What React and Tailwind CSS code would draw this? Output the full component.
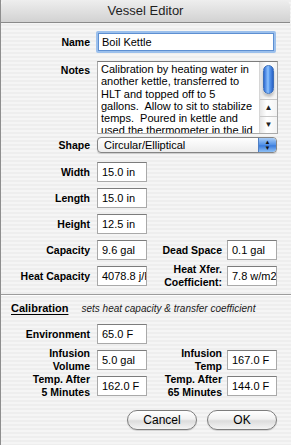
import React from "react";

const NOTES = [
  "Calibration by heating water in",
  "another kettle, transferred to",
  "HLT and topped off to 5",
  "gallons.  Allow to sit to stabilize",
  "temps.  Poured in kettle and",
  "used the thermometer in the lid",
];

function Field({ value }) {
  return (
    <div className="h-[20px] w-[50px] overflow-hidden whitespace-nowrap border border-[#a9a9a9] border-t-[#7c7c7c] bg-white pl-[4px] text-[11px] leading-[18px] text-black">
      {value}
    </div>
  );
}

function Label({ children, w = "w-[89px]" }) {
  return (
    <div className={`${w} shrink-0 text-right text-[10.5px] font-bold leading-[13px] text-black`}>
      {children}
    </div>
  );
}

function Row({ label, value, label2, value2 }) {
  return (
    <div className="flex h-[20px] items-center">
      <Label>{label}</Label>
      <div className="ml-[7px]">
        <Field value={value} />
      </div>
      {label2 && (
        <>
          <Label w="w-[75px]">{label2}</Label>
          <div className="ml-[5px]">
            <Field value={value2} />
          </div>
        </>
      )}
    </div>
  );
}

function AquaButton({ children }) {
  return (
    <div className="flex h-[20px] w-[70px] items-center justify-center rounded-full border border-[#7d7d7d] bg-[linear-gradient(to_bottom,#ffffff_0%,#f1f1f1_45%,#dcdcdc_55%,#f4f4f4_100%)] text-[12px] leading-none text-black shadow-[0_1px_1px_rgba(0,0,0,0.15)]">
      {children}
    </div>
  );
}

export default function App() {
  return (
    <div className="h-[445px] w-[291px] overflow-hidden bg-white font-['Liberation_Sans',Arial,sans-serif]">
      <div className="flex h-full w-[291px] flex-col border-l border-[#8e8e8e] bg-[repeating-linear-gradient(to_bottom,#eeeeee_0px,#eeeeee_2px,#f5f5f5_2px,#f5f5f5_4px)]">
        {/* title bar */}
        <div className="mr-[1px] flex h-[23px] shrink-0 items-center justify-center rounded-t-[6px] border-b border-[#8a8a8a] bg-[linear-gradient(to_bottom,#eeeeee,#d2d2d2)] text-[13px] text-[#1e1e1e]">
          Vessel Editor
        </div>

        {/* name */}
        <div className="mt-[8px] flex h-[22px] items-center">
          <Label>Name</Label>
          <div className="ml-[6px] rounded-[2px] border-2 border-[#9cc0ec]">
            <div className="flex h-[18px] w-[176px] items-center border border-[#5d8fd2] bg-white pl-[3px] text-[11px] text-black">
              Boil Kettle
            </div>
          </div>
        </div>

        {/* notes */}
        <div className="mt-[8px] flex items-start">
          <div className="pt-[3px]">
            <Label>Notes</Label>
          </div>
          <div className="ml-[7px] flex h-[73px] w-[181px] border border-[#a9a9a9] border-t-[#7c7c7c] bg-white">
            <div className="flex-1 overflow-hidden pl-[3px] pt-[1px] text-[11px] leading-[12.25px] text-black">
              {NOTES.map((l) => (
                <div key={l} className="whitespace-pre">
                  {l}
                </div>
              ))}
            </div>
            {/* scrollbar */}
            <div className="flex w-[18px] flex-col border-l border-[#d6d6d6] bg-[linear-gradient(to_right,#e6e6e6,#ffffff_40%,#f3f3f3)]">
              <div className="flex h-[38px] justify-center pt-[3px]">
                <div className="h-[29px] w-[11px] rounded-full border border-[#3d6fb8] bg-[linear-gradient(to_right,#2f6cd4,#8fc3ff_45%,#5b9cf0_60%,#2b62c6)] shadow-[0_3px_3px_rgba(0,0,0,0.25)]" />
              </div>
              <div className="flex-1" />
              <div className="flex h-[17px] items-center justify-center border-t border-[#c8c8c8] text-[8px] text-[#222]">
                ▲
              </div>
              <div className="flex h-[17px] items-center justify-center border-t border-[#c8c8c8] text-[8px] text-[#222]">
                ▼
              </div>
            </div>
          </div>
        </div>

        {/* shape */}
        <div className="mt-[3px] flex h-[16px] items-center">
          <Label>Shape</Label>
          <div className="ml-[7px] flex h-[16px] w-[180px] overflow-hidden rounded-[4px] border border-[#858585] bg-[linear-gradient(to_bottom,#ffffff,#ececec)] shadow-[0_1px_1px_rgba(0,0,0,0.15)]">
            <div className="flex-1 pl-[6px] text-[11px] leading-[14px] text-black">
              Circular/Elliptical
            </div>
            <div className="flex w-[18px] flex-col items-center justify-center rounded-r-[3px] border-l border-[#4f7fc4] bg-[linear-gradient(to_bottom,#a9cdf7,#4f8fe6_50%,#3a7bdc_55%,#8ec0f5)] text-[6px] leading-[6px] text-[#111]">
              <span>▲</span>
              <span>▼</span>
            </div>
          </div>
        </div>

        {/* dimensions */}
        <div className="mt-[9px] flex flex-col gap-[6px]">
          <Row label="Width" value="15.0 in" />
          <Row label="Length" value="15.0 in" />
          <Row label="Height" value="12.5 in" />
          <Row label="Capacity" value="9.6 gal" label2="Dead Space" value2="0.1 gal" />
          <Row
            label="Heat Capacity"
            value="4078.8 j/F"
            label2={
              <>
                Heat Xfer.
                <br />
                Coefficient:
              </>
            }
            value2="7.8 w/m2K"
          />
        </div>

        {/* separator */}
        <div className="mt-[8px] h-[2px] border-t border-b border-t-[#9d9d9d] border-b-white" />

        {/* calibration */}
        <div className="mt-[5px] flex h-[14px] items-center pl-[10px]">
          <span className="text-[11px] font-bold text-black underline underline-offset-2">
            Calibration
          </span>
          <span className="ml-[13px] text-[10px] italic text-[#1a1a1a]">
            sets heat capacity &amp; transfer coefficient
          </span>
        </div>

        <div className="mt-[9px] flex flex-col gap-[6px]">
          <Row label="Environment" value="65.0 F" />
          <Row
            label={
              <>
                Infusion
                <br />
                Volume
              </>
            }
            value="5.0 gal"
            label2={
              <>
                Infusion
                <br />
                Temp
              </>
            }
            value2="167.0 F"
          />
          <Row
            label={
              <>
                Temp. After
                <br />5 Minutes
              </>
            }
            value="162.0 F"
            label2={
              <>
                Temp. After
                <br />
                65 Minutes
              </>
            }
            value2="144.0 F"
          />
        </div>

        {/* buttons */}
        <div className="mt-[14px] flex justify-end gap-[10px] pr-[14px]">
          <AquaButton>Cancel</AquaButton>
          <AquaButton>OK</AquaButton>
        </div>
      </div>
    </div>
  );
}
